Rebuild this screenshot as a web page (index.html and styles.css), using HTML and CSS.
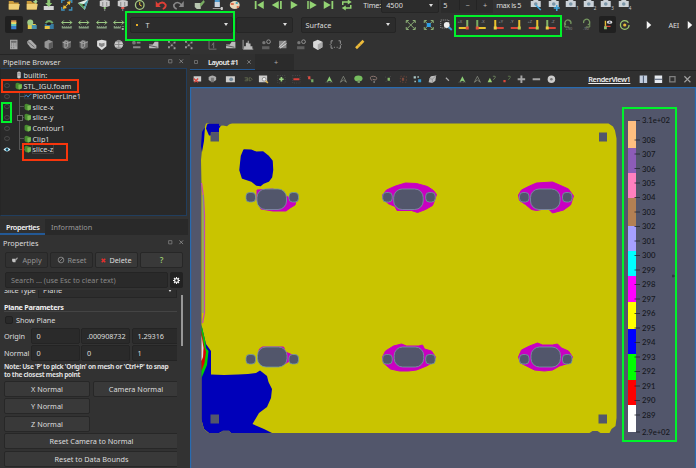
FILE: index.html
```
<!DOCTYPE html>
<html lang="en">
<head>
<meta charset="utf-8">
<title>ParaView</title>
<link rel="stylesheet" href="styles.css">
</head>
<body>
<svg class="defs" aria-hidden="true">
<symbol id="folder" viewBox="0 0 14 14"><path d="M2 3h4.500l1 1.500H12v7H2z" fill="#c99b3c"/><path d="M2 6h11l-1 5.500H2z" fill="#efcf76"/></symbol>
<symbol id="folder2" viewBox="0 0 14 14"><path d="M2 3h4.500l1 1.500H12v7H2z" fill="#c99b3c"/><path d="M2 6h11l-1 5.500H2z" fill="#efcf76"/><path d="M8 3h2V1h2v2h1l-2 3z" fill="#a5d18d"/></symbol>
<symbol id="save" viewBox="0 0 14 14"><path d="M2 8h10v4H2z" fill="#d5d5d5"/><path d="M5.500 1h3v4h2L7 9 3.500 5h2z" fill="#8fc975"/></symbol>
<symbol id="extract" viewBox="0 0 14 14"><path d="M2 5V2h3M9 2h3v3M2 9v3h3M9 12h3V9" fill="none" stroke="#3f92bf" stroke-width="1.300"/><path d="M3 11 4 7l1.300 1.200L8 5.500 7 4l4-1-1 4-1.300-1L6 8.700 7.200 10z" fill="#f3bf35"/></symbol>
<symbol id="catalyst" viewBox="0 0 14 14"><path d="m1 5 11-4-4 11z" fill="#e4eee7"/><path d="m1 5 6 1 1 6z" fill="#5c9d61"/><path d="m7 6 5-5-4 11z" fill="#4c9fb0"/><path d="M6 6h2v2H6z" fill="#332"/></symbol>
<symbol id="server" viewBox="0 0 14 14"><path d="M2 3q5-2 10 0v5q-5 2-10 0z" fill="#ccc"/><path d="M5 4v4M9 4v4M7 9v4" stroke="#8a8a8a"/><path d="M6 9h2v2H6z" fill="#8cc276"/></symbol>
<symbol id="serverx" viewBox="0 0 14 14"><path d="M2 3q5-2 10 0v5q-5 2-10 0z" fill="#ccc"/><path d="M5 4v4M9 4v4M7 9v4" stroke="#8a8a8a"/><path d="M5.500 9h3v2h-3z" fill="#df5b54"/></symbol>
<symbol id="timer" viewBox="0 0 14 14"><circle cx="7" cy="7" r="4.300" fill="#2c2c2c" stroke="#a5c982" stroke-width="1.300"/><path d="M7 4v3l2 1" fill="none" stroke="#e8c33b"/></symbol>
<symbol id="undo" viewBox="0 0 14 14"><path d="M4 7q5-5 8 0 0 3-3 4" fill="none" stroke="#df3f36" stroke-width="1.800"/><path d="M2 3v6h5z" fill="#df3f36"/></symbol>
<symbol id="redo" viewBox="0 0 14 14"><path d="M10 7Q5 2 2 7q0 3 3 4" fill="none" stroke="#888" stroke-width="1.600"/><path d="M12 3v6H7z" fill="#888"/></symbol>
<symbol id="apply" viewBox="0 0 14 14"><path d="M2 5h6v6H4L2 9z" fill="#b8c7b0"/><path d="m7 6 4-4 1 2-4 5z" fill="#78ad60"/></symbol>
<symbol id="legend" viewBox="0 0 14 14"><path d="M4 0h5v9H4z" fill="#4e9bd0"/><path d="M4 4h5v5H4z" fill="#cdd5dc"/><path d="M2 10h10v1H2z" fill="#999"/><path d="M10 9h2v3h-2z" fill="#ccc"/></symbol>
<symbol id="palette" viewBox="0 0 14 14"><ellipse cx="7" cy="7" rx="5" ry="4" fill="#e6d8b9"/><path d="M3 5h3v2H3zM9 8h2v2H9z" fill="#df704d"/><path d="M8 4h2v2H8z" fill="#4aa8ba"/></symbol>
<symbol id="first" viewBox="0 0 14 14"><path d="M3 3h1.800v8H3zM12 3v8L5.500 7z" fill="#93d373"/></symbol>
<symbol id="prev" viewBox="0 0 14 14"><path d="M9 3v8L2 7zM10.300 3H12v8h-1.700z" fill="#93d373"/></symbol>
<symbol id="play" viewBox="0 0 14 14"><path d="m4 3 7 4-7 4z" fill="#93d373"/></symbol>
<symbol id="next" viewBox="0 0 14 14"><path d="m5 3 7 4-7 4zM2.500 3H4v8H2.500z" fill="#93d373"/></symbol>
<symbol id="last" viewBox="0 0 14 14"><path d="M9.700 3h1.800v8H9.700zM2 3v8l7-4z" fill="#93d373"/></symbol>
<symbol id="loop" viewBox="0 0 14 14"><path d="M3 7V4h6M11 7v3H5" fill="none" stroke="#93d373" stroke-width="1.500"/><path d="m8 1.500 4 2.500-4 2.500zM6 7.500 2 10l4 2.500z" fill="#93d373"/></symbol>
<symbol id="cam" viewBox="0 0 14 14"><path d="M2 3h2l1-1h4l1 1h2v6H2z" fill="#cbd2d8"/><circle cx="7" cy="6" r="1.800" fill="#7a96a8"/></symbol>
<symbol id="camlink" viewBox="0 0 14 14"><use href="#cam"/><path d="m7 7 5 5" stroke="#41a8df" stroke-width="1.600"/></symbol>
<symbol id="camadd" viewBox="0 0 14 14"><use href="#cam"/><path d="M10 7v6M7 10h6" stroke="#41a8df" stroke-width="1.600"/></symbol>
<symbol id="cbar" viewBox="0 0 14 14"><path d="M4.200 2.500h5.600v3H4.200z" fill="#d99655"/><path d="M4.200 4.500h5.600v2H4.200z" fill="#e5de68"/><path d="M4.200 6.500h5.600v2H4.200z" fill="#62c5b7"/><path d="M4.200 8.500h5.600v3.500H4.200z" fill="#397dcc"/></symbol>
<symbol id="editmap" viewBox="0 0 14 14"><path d="M3 6h8v5H3z" fill="#e6cf4d"/><path d="M7 7h5v4H7z" fill="#4a92ad"/><circle cx="5.500" cy="4.500" r="3" fill="#9fcc88"/></symbol>
<symbol id="sepmap" viewBox="0 0 14 14"><path d="M3 6h9v5H3z" fill="#377aa1"/><path d="M3 8h5v3H3z" fill="#ebc643"/><path d="M4 5q3-4 7 0" fill="none" stroke="#72a966" stroke-width="2"/><path d="M5 5h4v2H5z" fill="#222"/></symbol>
<symbol id="rescale" viewBox="0 0 14 14"><path d="M2 4.500h10M4 2.500l-2 2 2 2M10 2.500l2 2-2 2" fill="none" stroke="#9ccb83"/><path d="M2 8h10v2.500H2z" fill="#829a7c"/><path d="M4 8v1M6 8v1M8 8v1M10 8v1" stroke="#2c2c2c"/></symbol>
<symbol id="rescalet" viewBox="0 0 14 14"><use href="#rescale"/><path d="M9 9h4v3H9z" fill="#303030"/><path d="M10 10h2v2h-2z" fill="#aaa"/></symbol>
<symbol id="reset" viewBox="0 0 14 14"><path d="m3 3 8 8M11 3l-8 8" stroke="#8caf76"/><path d="M2.500 5V2.500H5M9 2.500h2.500V5M2.500 9v2.500H5M9 11.500h2.500V9" fill="none" stroke="#8caf76"/></symbol>
<symbol id="resetd" viewBox="0 0 14 14"><use href="#reset"/><path d="M5 5h4v4H5z" fill="#2e9fe5"/></symbol>
<symbol id="zoombox" viewBox="0 0 14 14"><path d="M2 2h8v8H2z" fill="none" stroke="#999" stroke-dasharray="1"/><circle cx="8" cy="7" r="2.900" fill="#eee"/><path d="m10 9 3 3" stroke="#409bd1" stroke-width="1.800"/></symbol>
<symbol id="axr" viewBox="0 0 14 14"><path d="M3.500 2v8" fill="none" stroke="#79ad60" stroke-width="2"/><path d="M4 10h8" stroke="#e9c32d" stroke-width="2"/><path d="M2 8.500h3v3H2z" fill="#e4523d"/></symbol>
<symbol id="axy" viewBox="0 0 14 14"><path d="M3.500 2v8" stroke="#e9c32d" stroke-width="2"/><path d="M4 10h8" stroke="#db4637" stroke-width="2"/><path d="M2 8.500h3v3H2z" fill="#ead246"/></symbol>
<symbol id="axz" viewBox="0 0 14 14"><path d="M3.500 2v8" stroke="#84b569" stroke-width="2"/><path d="M4 10h8" stroke="#db4637" stroke-width="2"/><path d="M2 8.500h3v3H2z" fill="#ead246"/></symbol>
<symbol id="axl" viewBox="0 0 14 14"><path d="M10.500 2v8" stroke="#84b569" stroke-width="2"/><path d="M2 10h8" stroke="#e9c32d" stroke-width="2"/><path d="M9 8.500h3v3H9z" fill="#e4523d"/></symbol>
<symbol id="axly" viewBox="0 0 14 14"><path d="M10.500 2v8" stroke="#e9c32d" stroke-width="2"/><path d="M2 10h8" stroke="#db4637" stroke-width="2"/><path d="M9 8.500h3v3H9z" fill="#bccf4d"/></symbol>
<symbol id="rotr" viewBox="0 0 14 14"><path d="M9 6a3 3 0 1 0-5 1" fill="none" stroke="#76975f" stroke-width="1.300"/><path d="M3 5v4h4" fill="none" stroke="#76975f"/></symbol>
<symbol id="rotl" viewBox="0 0 14 14"><path d="M5 5a3 3 0 1 1 4 2" fill="none" stroke="#76975f" stroke-width="1.300"/><path d="M11 5v4H7" fill="none" stroke="#76975f"/></symbol>
<symbol id="orient" viewBox="0 0 14 14"><path d="M4.500 3v7" stroke="#e8bd32" stroke-width="1.500"/><path d="M4 9h6" stroke="#db4637" stroke-width="1.500"/><path d="M3 9h3v3H3z" fill="#91be70"/><ellipse cx="9" cy="4.500" rx="3" ry="1.800" fill="#ddd"/><circle cx="9" cy="4.500" r="1" fill="#557"/></symbol>
<symbol id="center" viewBox="0 0 14 14"><circle cx="7" cy="7" r="4.300" fill="none" stroke="#9bc96f" stroke-width="1.300" stroke-dasharray="24 3"/><circle cx="7" cy="7" r="1.600" fill="#e7bc37"/></symbol>
<symbol id="arrow" viewBox="0 0 14 14"><path d="m5 3 4.500 4L5 11z" fill="#f4f4f4"/></symbol>
<symbol id="calc" viewBox="0 0 14 14"><path d="M3 2h8v10H3z" fill="#aaa"/><path d="M4 3h6v2H4zM4 6h1v1H4zM6.500 6h1v1h-1zM9 6h1v1H9zM4 8h1v1H4zM6.500 8h1v1h-1zM9 8h1v1H9zM4 10h1v1H4zM6.500 10h1v1h-1z" fill="#686868"/></symbol>
<symbol id="contour" viewBox="0 0 14 14"><path d="M2 4q3-4 6 0l4 4v3q-5 2-8-3Q2 7 2 4z" fill="#aaa"/><path d="m3 4 7 6" stroke="#666"/></symbol>
<symbol id="cube" viewBox="0 0 14 14"><path d="m2.500 4 4.500-2 4.500 2v6L7 12.500 2.500 10z" fill="#969696"/><path d="m7 6 4.500-2v6L7 12.500z" fill="#5b5b5b"/></symbol>
<symbol id="cube2" viewBox="0 0 14 14"><path d="m2.500 4 4.500-2 4.500 2v6L7 12.500 2.500 10z" fill="#666"/><path d="M5 3v8l3-2V4zM2.500 4.500 7 6l4.500-2" fill="none" stroke="#aaa"/></symbol>
<symbol id="shield" viewBox="0 0 14 14"><path d="m2 3 5-1 5 1v6l-5 4-5-4z" fill="#ddd"/><path d="m4 5 3 1 3-1v3l-3 2-3-2z" fill="#888"/></symbol>
<symbol id="globe" viewBox="0 0 14 14"><circle cx="7" cy="7" r="4.700" fill="#ccc"/><path d="M2 7h10M7 2v10M4 4h6M4 10h6" stroke="#888"/></symbol>
<symbol id="glyphs" viewBox="0 0 14 14"><circle cx="4" cy="5" r="2" fill="#777"/><path d="M7 4h4v2H7zM3 9h8v2H3z" fill="#888"/></symbol>
<symbol id="stream" viewBox="0 0 14 14"><path d="M2 7h4l2-3h4v7H2z" fill="#bbb"/><path d="m2 8 9 2" stroke="#555"/></symbol>
<symbol id="dots" viewBox="0 0 14 14"><path d="m4 4 3 3 4-3M7 7l4 4M7 7l-3 4" stroke="#555" fill="none"/><path d="M3 3h2v2H3zM9 4h2v2H9zM6 7h2v2H6zM9 10h2v2H9zM3 9h2v2H3z" fill="#999"/></symbol>
<symbol id="plotl" viewBox="0 0 14 14"><path d="M3 2v10h8" fill="none" stroke="#777"/><path d="M6 8l2-3v6" fill="none" stroke="#777"/></symbol>
<symbol id="hist" viewBox="0 0 14 14"><path d="M2 2v10h11" fill="none" stroke="#aaa"/><path d="M3 12V9h2V5h2V3h1v3h2v3h2v3z" fill="#bbb"/></symbol>
<symbol id="pick" viewBox="0 0 14 14"><circle cx="5" cy="5" r="1.800" fill="#777"/><circle cx="10" cy="4" r="2" fill="none" stroke="#999"/><path d="M3 9h8v3H3z" fill="#606060"/></symbol>
<symbol id="ramp" viewBox="0 0 14 14"><path d="M3 3h8v8H3z" fill="#888"/><path d="m3 10 7-7M4 11l7-5" stroke="#ddd"/></symbol>
<symbol id="poly" viewBox="0 0 14 14"><path d="m2 4 5-2 5 2v6l-5 3-5-3z" fill="#d8d8d8"/><path d="m7 7 5-3v6l-5 3z" fill="#aaa"/></symbol>
<symbol id="braces" viewBox="0 0 14 14"><path d="M4 3H2v3L1 7l1 1v3h2M10 3h2v3l1 1-1 1v3h-2" fill="none" stroke="#999"/><path d="M5 10h1M8 10h1" stroke="#aaa"/></symbol>
<symbol id="ruler" viewBox="0 0 14 14"><path d="m2 10 8-8 2 2-8 8z" fill="#efbd3b"/><path d="m5 8 1 1M7 6l1 1" stroke="#a5792c"/></symbol>
<symbol id="camred" viewBox="0 0 14 14"><path d="M2 3h10v7H2z" fill="#ccc"/><path d="m3 11 5-5M2 6l6 5" stroke="#dc4940" stroke-width="1.800"/></symbol>
<symbol id="camgray" viewBox="0 0 14 14"><path d="M2 4q5-4 10 0v4q-5 4-10 0z" fill="#aaa"/><path d="M5 5h4v6H5z" fill="#787878"/></symbol>
<symbol id="shot" viewBox="0 0 14 14"><path d="M1 3h12v8H1z" fill="#ccc"/><circle cx="8" cy="7" r="2.500" fill="#708798"/></symbol>
<symbol id="three" viewBox="0 0 14 14"><path d="M2 5h4v4H2M3 7h3M8 5h2q4 2 0 4H8z" fill="none" stroke="#687052"/></symbol>
<symbol id="zoomv" viewBox="0 0 14 14"><path d="M1 2h11v9H1z" fill="#ccc"/><circle cx="8" cy="7" r="2.500" fill="#eee" stroke="#777"/><path d="m10 9 3 3" stroke="#ddb14a" stroke-width="2"/></symbol>
<symbol id="plusg" viewBox="0 0 14 14"><path d="M2 2h10v10H2z" fill="none" stroke="#555" stroke-dasharray="1 2"/><path d="M7 4v6M4 7h6" stroke="#9bd47d" stroke-width="2.200"/></symbol>
<symbol id="minusr" viewBox="0 0 14 14"><path d="M2 2h10v10H2z" fill="none" stroke="#555" stroke-dasharray="1 2"/><path d="M3 7h8" stroke="#dc4039" stroke-width="2.400"/></symbol>
<symbol id="selr" viewBox="0 0 14 14"><path d="m3 3 8 8" stroke="#777" stroke-dasharray="1"/><path d="M4 3h3v4H4z" fill="#df4e43"/><path d="M8 7h3v4H8z" fill="#76ad64"/></symbol>
<symbol id="tri" viewBox="0 0 14 14"><path d="m7 3 4 8-4-2-4 2z" fill="#8aca75"/><path d="M2 11h10" stroke="#777" stroke-dasharray="1"/></symbol>
<symbol id="trio" viewBox="0 0 14 14"><path d="m7 3 4 8-4-3-4 3z" fill="none" stroke="#898f82"/></symbol>
<symbol id="blob" viewBox="0 0 14 14"><ellipse cx="7" cy="6" rx="5.500" ry="4" fill="#76bd5f"/><path d="M6 8h3v4H6z" fill="#769366"/></symbol>
<symbol id="lasso" viewBox="0 0 14 14"><path d="M5 9Q0 3 7 3q7 1 3 5L6 7" fill="none" stroke="#8e7771" stroke-width="1.300"/><path d="M7 9h2v3H7z" fill="#777"/></symbol>
<symbol id="dotg" viewBox="0 0 14 14"><path d="m3 4 8 7M10 3l-7 8" stroke="#666" stroke-dasharray="1 2"/><path d="M6 5h3v4H6z" fill="#86ba68"/></symbol>
<symbol id="dotr" viewBox="0 0 14 14"><path d="M3 3h8v8H3z" fill="none" stroke="#5d4038" stroke-width="1.500" stroke-dasharray="2 2"/><path d="M5 5h3v4H5z" fill="#7c4a3c"/></symbol>
<symbol id="selb" viewBox="0 0 14 14"><path d="M2 3h3v3H2zM7 3h2v2H7zM3 9h2v2H3z" fill="#acc8c8"/><path d="M8 7h4v4H8z" fill="#3399cd"/></symbol>
<symbol id="poly2" viewBox="0 0 14 14"><path d="m5 3 7-1-1 7-4 3-5-1 1-5z" fill="#bbb"/><path d="m3 6 4 1 5-5M7 7v5" fill="none" stroke="#888"/></symbol>
<symbol id="smalldot" viewBox="0 0 14 14"><path d="m5 5 4 4" stroke="#aaa" stroke-width="1.500"/></symbol>
<symbol id="triq" viewBox="0 0 14 14"><path d="m5 5 3 6H2z" fill="#99cd72"/><path d="M9 3h3v2l-2 2v1" fill="none" stroke="#789166"/></symbol>
<symbol id="dotq" viewBox="0 0 14 14"><path d="M3 8h3v3H3z" fill="#df4739"/><path d="M9 3h3v2l-2 2v1" fill="none" stroke="#658453"/></symbol>
<symbol id="plusw" viewBox="0 0 14 14"><path d="M7 2v10M2 7h10" stroke="#a4a4a4" stroke-width="2.600"/></symbol>
<symbol id="minusw" viewBox="0 0 14 14"><path d="M2 7h10" stroke="#a4a4a4" stroke-width="2.400"/></symbol>
<symbol id="disc" viewBox="0 0 14 14"><circle cx="7" cy="7" r="5" fill="#ccc"/><circle cx="7" cy="7" r="1.700" fill="#777"/></symbol>
<symbol id="splith" viewBox="0 0 14 14"><path d="M2 2h10v10H2z" fill="#c2cdde"/><path d="M7 2v10" stroke="#46536c" stroke-width="1.300"/></symbol>
<symbol id="splitv" viewBox="0 0 14 14"><path d="M2 2h10v10H2z" fill="#e6eaf0"/><path d="M2 7h10" stroke="#46536c" stroke-width="1.300"/></symbol>
<symbol id="max" viewBox="0 0 14 14"><path d="M3.500 3.500h7v7h-7z" fill="none" stroke="#808080" stroke-width="1.700"/></symbol>
<symbol id="close" viewBox="0 0 14 14"><path d="m3 3 8 8M11 3l-8 8" stroke="#a0a0a0" stroke-width="1.500"/></symbol>
<symbol id="green" viewBox="0 0 14 14"><path d="M1 3q3-3 6-1l5 2v7l-4 2q-5 1-7-3z" fill="#488d2f"/><path d="m6 5 6-1v7l-4 2-2-1z" fill="#7cba55"/></symbol>
<symbol id="line" viewBox="0 0 14 14"><path d="M1 3v9h12" fill="none" stroke="#424b56"/><path d="m1 9 3-4 3 4 4-5h2" fill="none" stroke="#4087c7" stroke-width="1.700"/></symbol>
<symbol id="eye" viewBox="0 0 14 14"><path d="M0 7q7-8 14 0-7 8-14 0z" fill="#ecf7fb"/><circle cx="7" cy="7" r="3.500" fill="#49a9cb"/><circle cx="7" cy="7" r="2" fill="#162b35"/></symbol>
<symbol id="eyeoff" viewBox="0 0 14 14"><path d="M2 7q0-4 5-4t5 4-5 4-5-4z" fill="none" stroke="#535353" stroke-width="1.500"/></symbol>
<symbol id="db" viewBox="0 0 14 14"><path d="M4 2q3-2 6 0v10q-3 2-6 0z" fill="#ccc"/><path d="M5 4h4M5 7h4" stroke="#666"/></symbol>
<symbol id="gear" viewBox="0 0 14 14"><circle cx="7" cy="7" r="3.800" fill="none" stroke="#f2f2f2" stroke-width="2.400"/><path d="M7 0v3M7 11v3M0 7h3M11 7h3M2 2l2 2M10 10l2 2M12 2l-2 2M4 10l-2 2" stroke="#f2f2f2" stroke-width="2.200"/></symbol>
<symbol id="ban" viewBox="0 0 14 14"><circle cx="7" cy="7" r="5" fill="none" stroke="#858585" stroke-width="1.600"/><path d="m3.500 10.500 7-7" stroke="#858585" stroke-width="1.500"/></symbol>
<symbol id="delx" viewBox="0 0 14 14"><path d="m2 2 10 10M12 2 2 12" stroke="#e1302e" stroke-width="4.500"/></symbol>
</svg>

<div class="app">
<header class="toolbars">
<div class="bar bar1">
<svg><use href="#folder"/></svg><svg><use href="#folder2"/></svg><svg><use href="#save"/></svg><svg><use href="#extract"/></svg><svg><use href="#catalyst"/></svg>
<svg class="gap"><use href="#server"/></svg><svg><use href="#serverx"/></svg><svg><use href="#timer"/></svg>
<svg class="gap"><use href="#undo"/></svg><svg><use href="#redo"/></svg>
<svg class="gap"><use href="#apply"/></svg><svg><use href="#legend"/></svg><svg><use href="#palette"/></svg>
<svg class="gap2"><use href="#first"/></svg><svg><use href="#prev"/></svg><svg><use href="#play"/></svg><svg><use href="#next"/></svg><svg><use href="#last"/></svg><svg><use href="#loop"/></svg>
<span class="time">Time:</span><div class="combo timebox">4500<i class="caret"></i></div><div class="spin"><span>5</span><b>−</b><b>+</b></div><span class="maxis">max is 5</span>
<svg><use href="#camlink"/></svg><svg><use href="#camadd"/></svg><span class="cam"><svg><use href="#cam"/></svg><small>1</small></span><span class="cam"><svg><use href="#cam"/></svg><small>2</small></span><span class="cam"><svg><use href="#cam"/></svg><small>3</small></span><span class="cam"><svg><use href="#cam"/></svg><small>4</small></span>
</div>
<div class="bar bar2">
<svg class="on"><use href="#cbar"/></svg><svg><use href="#editmap"/></svg><svg><use href="#sepmap"/></svg><svg><use href="#rescale"/></svg><svg><use href="#rescale"/></svg><svg><use href="#rescale"/></svg><svg><use href="#rescalet"/></svg>
<div class="combo array"><i class="point"></i>T<i class="caret"></i></div><div class="combo component"><i class="caret"></i></div><div class="combo repr">Surface<i class="caret"></i></div>
<svg><use href="#reset"/></svg><svg><use href="#resetd"/></svg><svg><use href="#zoombox"/></svg>
<span class="cam ax l"><svg><use href="#axl"/></svg><small>+X</small></span><span class="cam ax"><svg><use href="#axr"/></svg><small>-X</small></span><span class="cam ax"><svg><use href="#axy"/></svg><small>+Y</small></span><span class="cam ax l"><svg><use href="#axly"/></svg><small>-Y</small></span><span class="cam ax l"><svg><use href="#axly"/></svg><small>+Z</small></span><span class="cam ax"><svg><use href="#axz"/></svg><small>-Z</small></span>
<span class="cam rot"><svg><use href="#rotr"/></svg><small>+90</small></span><span class="cam rot"><svg><use href="#rotl"/></svg><small>-90</small></span>
<svg class="on orient"><use href="#orient"/></svg><svg><use href="#center"/></svg><svg class="gap2"><use href="#arrow"/></svg><span class="aei">AEI</span><svg><use href="#arrow"/></svg>
</div>
<div class="bar bar3">
<svg><use href="#calc"/></svg><svg><use href="#contour"/></svg><svg><use href="#cube"/></svg><svg><use href="#cube2"/></svg><svg><use href="#cube2"/></svg><svg><use href="#shield"/></svg><svg><use href="#globe"/></svg><svg><use href="#glyphs"/></svg><svg><use href="#stream"/></svg><svg><use href="#dots"/></svg><svg><use href="#dots"/></svg>
<svg class="gap2"><use href="#plotl"/></svg><svg><use href="#stream"/></svg><svg><use href="#hist"/></svg><svg><use href="#pick"/></svg><svg><use href="#ramp"/></svg><svg><use href="#pick"/></svg><svg><use href="#poly"/></svg><svg><use href="#braces"/></svg><svg class="gap2"><use href="#ruler"/></svg>
</div>
</header>

<main class="work">
<aside class="side">
<div class="title">Pipeline Browser<span class="btns"><svg><use href="#max"/></svg><svg><use href="#close"/></svg></span></div>
<div class="tree">
<div class="node root"><svg class="vis"></svg><svg class="type"><use href="#db"/></svg>builtin:</div>
<div class="node foam"><svg class="vis"><use href="#eyeoff"/></svg><svg class="type"><use href="#green"/></svg>STL_IGU.foam</div>
<div class="node"><svg class="vis"><use href="#eyeoff"/></svg><i class="twig"></i><svg class="type"><use href="#line"/></svg>PlotOverLine1</div>
<div class="node"><svg class="vis"><use href="#eyeoff"/></svg><i class="twig"></i><svg class="type"><use href="#green"/></svg>slice-x</div>
<div class="node"><svg class="vis"><use href="#eyeoff"/></svg><i class="twig box"></i><svg class="type"><use href="#green"/></svg>slice-y</div>
<div class="node"><svg class="vis"><use href="#eyeoff"/></svg><i class="twig none"></i><svg class="type"><use href="#green"/></svg>Contour1</div>
<div class="node"><svg class="vis"><use href="#eyeoff"/></svg><i class="twig"></i><svg class="type"><use href="#green"/></svg>Clip1</div>
<div class="node"><svg class="vis"><use href="#eye"/></svg><i class="twig end"></i><svg class="type"><use href="#green"/></svg><span class="current">slice-z</span></div>
</div>
<nav class="tabs"><span class="active">Properties</span><span>Information</span></nav>
<div class="title prop">Properties<span class="btns"><svg><use href="#max"/></svg><svg><use href="#close"/></svg></span></div>
<div class="actions"><button class="off"><svg><use href="#apply"/></svg>Apply</button><button class="off"><svg><use href="#ban"/></svg>Reset</button><button><svg class="x"><use href="#delx"/></svg>Delete</button><button class="help">?</button></div>
<div class="search"><div class="field">Search ... (use Esc to clear text)</div><span class="cog"><svg><use href="#gear"/></svg></span></div>
<div class="scroller">
<div class="form">
<div class="cut"><div class="cutrow"><span>Slice Type</span><div class="plane">Plane<i class="caret"></i></div></div></div>
<h2>Plane Parameters</h2>
<label class="check"><i></i>Show Plane</label>
<div class="vec"><span>Origin</span><div class="field">0</div><div class="field">.000908732</div><div class="field">1.29316</div></div>
<div class="vec"><span>Normal</span><div class="field">0</div><div class="field">0</div><div class="field">1</div></div>
<p class="note">Note: Use 'P' to pick 'Origin' on mesh or 'Ctrl+P' to snap<br>to the closest mesh point</p>
<div class="normals"><button>X Normal</button><button>Camera Normal</button><button>Y Normal</button><i></i><button>Z Normal</button><i></i><button class="wide">Reset Camera to Normal</button><button class="wide">Reset to Data Bounds</button></div>
</div>
<div class="thumb"></div>
</div>
</aside>

<section class="view">
<div class="layouts"><div class="layout"><svg><use href="#max"/></svg><b>Layout #1</b><svg><use href="#close"/></svg></div><span class="add">+</span></div>
<div class="vbar">
<svg><use href="#camred"/></svg><svg><use href="#camgray"/></svg><svg class="g"><use href="#shot"/></svg><svg class="g"><use href="#three"/></svg><svg><use href="#zoomv"/></svg><svg class="g"><use href="#plusg"/></svg><svg><use href="#minusr"/></svg><svg><use href="#selr"/></svg><svg class="g"><use href="#tri"/></svg><svg><use href="#trio"/></svg><svg><use href="#blob"/></svg><svg><use href="#lasso"/></svg><svg><use href="#dotg"/></svg><svg><use href="#dotr"/></svg><svg><use href="#selb"/></svg><svg><use href="#poly2"/></svg><svg><use href="#smalldot"/></svg><svg><use href="#tri"/></svg><svg><use href="#trio"/></svg><svg><use href="#triq"/></svg><svg><use href="#dotq"/></svg><svg><use href="#plusw"/></svg><svg><use href="#minusw"/></svg><svg><use href="#disc"/></svg>
<span class="vname">RenderView1</span><svg><use href="#splith"/></svg><svg><use href="#splitv"/></svg><svg><use href="#max"/></svg><svg><use href="#close"/></svg>
</div>
<svg class="render" viewBox="190 87 506 381">
<path fill="#c9c400" d="M206 123.500h402.500l4.500 3 2 4 1.500 8V418l-1 8-4 3-2 4h-9l-3-2h-5l-3 2H204l-2.500-10V185l-.5-25 3-30z"/>
<path fill="#0000ba" d="M207 124.500l2-1h11l1 2-2 3v4h-8v3h-2l-3-7zM205 127l-1 14-2 11-1-6 1-14z"/>
<path fill="#0000ba" stroke="#0000ba" stroke-width="1.500" stroke-linejoin="round" d="M244 150l7 .2 5 2 7-.2 5 4 4 5 .5 9-1 7-3 4-5 2-3 2.500-4-.5-5-4-9-3-2.500-8 1.500-14z"/>
<path d="M219 123h13l-3 1.500-2 1.800-4-.8-4 .5z" fill="#52566b"/>
<path fill="#0000ba" d="M201.500 325L206 344L211 351V374.500L224 375L238 374.500L248 374L256 373L260 370.500L262 372L267 376L268.500 382L272 389L271 398L267 407L259 413L252.500 424L264 429L272 433H231L229 431H223L219 433H209L204 429L201.500 420z"/>
<path fill="#52566b" d="M201 418l3 11 5 4.500h-8zM219 433.500l4-3h6l2 3z"/>
<path fill="#00d000" d="M201.500 325L205 340L206 348L208.500 351L207 365L201.500 378z"/><path fill="#e00000" d="M201.500 330L204 346L206 352L204.500 363L201.500 371z"/><path fill="#ddd" d="M201.500 335L203.500 348L203 357L201.500 361z"/>
<path d="M201.500 183l2 14 1 18V313l-2 10" fill="none" stroke="#c64bae" stroke-width="1.300"/><path d="M203 195v118" stroke="#6194a3" stroke-width="1"/>
<g fill="#c900c1" stroke="#c900c1" stroke-linejoin="round">
<path d="M257 190v10l4 9 12 2h13l4-3 5-3 1-4-8-4-15-8z"/>
<path d="M382.500 195l4-5 9-4 10-3 11 .5 11 3 6 4 3 4-2 6-2 5-7 4-8 3-6-2H397l-2-4-7-3-5-5z"/>
<path d="M518.500 195l3-5 8-4 7-3 16-1 7 3 9 4 5 7-3 9-7 5-11 3-4-4-7 .500-5 1-5-1-6-5-6-4z"/>
<path d="M258.500 353l1-4 3-2h21l2 5 7 3-3 6-5 3-23 1z"/>
<path d="M382.500 357l3-6 8-5 8-2 5 2h12l4-1 2 4 7 2 4 6-2 5-7 4-10 4-8 1h-9l-9-2-7-6z"/>
<path d="M518.500 357l3-7 8-4 8-3 5 2h10l5-1 4 4 7 3 4 6-3 6-10 3-7 4-8 1-10-1-8-4-6-3z"/>
</g>
<g fill="#52566b" stroke="#7599a5" stroke-width=".8"><g id="fit"><rect x="257" y="189" width="29.500" height="20.500" rx="8.500"/><rect x="246" y="192.500" width="9.500" height="9.500" rx="3.500"/><rect x="289" y="192.500" width="9.500" height="9.500" rx="3.500"/></g><use href="#fit" x="136.700"/><use href="#fit" x="273.500"/>
<g id="fit2"><rect x="257.500" y="347" width="29.500" height="20" rx="8.500"/><rect x="246" y="354.500" width="9.500" height="9.500" rx="3.500"/><rect x="289" y="354.500" width="9.500" height="9.500" rx="3.500"/></g><use href="#fit2" x="136.700"/><use href="#fit2" x="273.500"/></g>
<path fill="#52566b" d="M210.500 132.500h8.500v9h-8.500zM599 132.500h8v9h-8zM210.500 414.500h8.500v9h-8.500zM598.500 414.500h8.500v9h-8.500z"/>
<g shape-rendering="crispEdges"><path fill="#ffbf80" d="M628 120.500h8v27h-8z"/><path fill="#8c5cb7" d="M628 147.500h8v25.500h-8z"/><path fill="#ff80bf" d="M628 173h8v25h-8z"/><path fill="#b38053" d="M628 198h8v27.500h-8z"/><path fill="#a6a0ff" d="M628 225.500h8v25h-8z"/><path fill="#00ffff" d="M628 250.500h8v25h-8z"/><path fill="#ff00ff" d="M628 275.500h8V302h-8z"/><path fill="#ffff00" d="M628 302h8v27h-8z"/><path fill="#0000ff" d="M628 329h8v24.500h-8z"/><path fill="#00ff00" d="M628 353.500h8v26.500h-8z"/><path fill="#ff0000" d="M628 380h8v25h-8z"/><path fill="#fff" d="M628 405h8v27h-8z"/></g>
<path stroke="#24262f" stroke-width=".8" d="M636 120.500h4M634.500 140h5.500M634.500 154h5.500M634.500 168.500h5.500M634.500 183h5.500M634.500 197.500h5.500M634.500 212h5.500M634.500 226.500h5.500M634.500 241h5.500M634.500 255.500h5.500M634.500 270h5.500M634.500 284.500h5.500M634.500 299h5.500M634.500 313.500h5.500M634.500 328h5.500M634.500 342.500h5.500M634.500 357h5.500M634.500 371.500h5.500M634.500 386h5.500M634.500 400.500h5.500M634.500 415h5.500M636 432h4M672 276h5M673 274.500v3"/>
<g class="ticks"><text x="642" y="123" textLength="28">3.1e+02</text><text x="642" y="142.500">308</text><text x="642" y="157">307</text><text x="642" y="171.500">306</text><text x="642" y="186">305</text><text x="642" y="200">304</text><text x="642" y="215">303</text><text x="642" y="229">302</text><text x="642" y="243.500">301</text><text x="642" y="258">300</text><text x="642" y="272.500">299</text><text x="642" y="287">298</text><text x="642" y="301.500">297</text><text x="642" y="316">296</text><text x="642" y="330.500">295</text><text x="642" y="345">294</text><text x="642" y="359.500">293</text><text x="642" y="374">292</text><text x="642" y="388.500">291</text><text x="642" y="403">290</text><text x="642" y="417.500">289</text><text x="642" y="434.500" textLength="28">2.9e+02</text></g>
<path d="M190.500 468V87.500h505V468" fill="none" stroke="#286bb0" stroke-width="1.400"/>
</svg>
</section>
</main>
<div class="mark green m1"></div><div class="mark green m2"></div><div class="mark green m3"></div><div class="mark green m4"></div><div class="mark red m5"></div><div class="mark red m6"></div>
</div>
</body>
</html>
```
FILE: styles.css
```
* { box-sizing: border-box; }
body { margin: 0; background: #323232; color: #dedede; font: 7.3px/10px "Noto Sans", sans-serif; overflow: hidden; }
.defs { position: absolute; width: 0; height: 0; }
svg { flex: none; }
.app { position: relative; width: 696px; height: 468px; overflow: hidden; display: flex; flex-direction: column; }
.toolbars { height: 54px; flex: none; overflow: hidden; }
.bar { display: flex; align-items: center; padding-left: 5px; white-space: nowrap; }
.bar > * { flex: none; }
.bar svg { width: 17.500px; height: 14px; }
.bar1 { height: 18px; margin-top: -4px; }
.bar2 { height: 21px; }
.bar3 { height: 18px; }
.bar3 svg { height: 13px; }
.bar .gap { margin-left: 3.700px; }
.bar .gap2 { margin-left: 6.600px; }
.bar svg.on { height: 17px; padding: 2px 0; background: #202020; border-radius: 2px; }
.combo { display: flex; align-items: center; height: 16px; padding: 0 5px; background: #2c2c2c; border: 1px solid #252525; border-radius: 2px; }
.caret { margin-left: auto; border: 2.500px solid transparent; border-top: 3px solid #ddd; border-bottom: 0; }
.time { width: 18px; margin-left: 8px; letter-spacing: -.2px; }
.timebox { width: 58px; padding-left: 4px; }
.spin { display: flex; align-items: center; width: 52px; height: 16px; margin-left: 2px; padding-left: 2px; background: #2c2c2c; }
.spin span { width: 16px; }
.spin b { width: 18px; text-align: center; font-weight: 400; color: #bbb; border-left: 1px solid #242424; }
.maxis { margin-left: 3px; width: 31px; letter-spacing: -.4px; }
.cam { position: relative; display: flex; width: 17.500px; }
.cam small { position: absolute; left: 14px; top: 7px; font-size: 4.500px; line-height: 6px; color: #ccc; }
.ax small { left: 9px; top: 1px; font-size: 4px; color: #999; }
.ax.l small { left: 3px; }
.rot small { left: 6px; top: 8px; font-size: 4px; color: #888; }
.array { width: 103px; margin-left: 2px; padding-right: 4px; }
.point { width: 2px; height: 2px; margin-right: 8px; background: #e5ad28; }
.component { width: 57px; margin-left: 3px; }
.repr { width: 95px; margin: 0 6.500px 0 8px; padding-left: 4px; }
.bar .orient { margin-left: 4px; }
.aei { width: 11px; margin-left: 11px; margin-right: 1px; letter-spacing: -.3px; }
.work { display: flex; flex: 1; min-height: 0; }
.side { width: 190px; flex: none; padding-right: 2px; border-top: 1px solid #252525; }
.title { display: flex; align-items: center; height: 13px; padding: 0 4px 0 3px; }
.btns { display: flex; gap: 4px; margin-left: auto; }
.btns svg { width: 6.500px; height: 6.500px; }
.tree { height: 148px; margin-right: 1px; padding-top: 1px; background: #292929; border: 1px solid #213e5e; border-left-color: #262626; }
.node { display: flex; align-items: center; height: 10.550px; }
.vis { width: 8px; height: 7px; margin-left: 2px; }
.type { width: 8px; height: 8px; margin: 0 .5px 0 4px; }
.twig { align-self: stretch; width: 6px; margin-left: 8px; border-left: 1px solid #555; background: linear-gradient(#555, #555) 0 50% / 4px 1px no-repeat; }
.twig + .type { margin-left: -1px; }
.none { background: none; }
.end { height: 6px; align-self: flex-start; border-bottom: 1px solid #555; background: none; }
.box::before { content: ""; display: block; width: 4px; height: 4px; margin: 3px 0 0 -3px; border: 1px solid #666; background: #222; }
.current { margin-left: -1px; border: 1px solid #414141; line-height: 8px; }
.tabs { display: flex; height: 16px; margin-top: 3px; background: #292929; color: #999; }
.tabs span { padding: 3px 6px 0; }
.tabs .active { color: #f3f3f3; font-weight: 600; width: 45px; background: #303030; border-bottom: 2px solid #235996; letter-spacing: -.35px; }
.title.prop { height: 15px; }
button { display: flex; align-items: center; justify-content: center; gap: 3px; height: 16px; padding: 0; border: 1px solid #272727; border-radius: 2px; background: #393939; color: #ddd; font: inherit; white-space: nowrap; }
.actions { display: grid; grid-template-columns: repeat(4, 43px); gap: 2px; padding: 2px 0 0 5px; }
.actions .off { background: #313131; color: #929292; }
.actions svg { width: 8px; height: 8px; }
.actions svg.x { width: 5px; height: 5px; }
.actions .off:first-child svg { filter: grayscale(1); }
.actions .help { color: #9cc971; font-weight: 600; font-size: 8px; }
.search { display: flex; gap: 2px; padding: 4px 0 0 5px; }
.field { display: flex; align-items: center; height: 16px; padding-left: 5px; background: #2a2a2a; border: 1px solid #242424; border-radius: 2px; }
.search .field { width: 163px; color: #888; }
.cog { display: flex; align-items: center; justify-content: center; width: 13px; height: 16px; background: #222; border-radius: 2px; }
.cog svg { width: 7px; height: 7px; }
.scroller { display: flex; height: 178px; margin-top: 2px; overflow: hidden; }
.form { width: 177px; padding-left: 4px; overflow: hidden; flex: none; }
.thumb { width: 2px; height: 51px; margin: 5px 0 0 4px; background: #989898; }
.cut { height: 8px; overflow: hidden; }
.cutrow { display: flex; align-items: center; height: 16px; margin-top: -8px; }
.cutrow span { width: 34px; letter-spacing: -.2px; }
.plane { display: flex; align-items: center; flex: 1; height: 16px; padding: 0 4px; background: #2d2d2d; border: 1px solid #252525; }
h2 { margin: 5px 0 0; height: 9px; font-size: 7.300px; line-height: 8px; letter-spacing: -.3px; color: #eee; border-bottom: 1px solid #444; }
.check { display: flex; align-items: center; height: 15px; margin-top: .8px; gap: 3px; }
.check i { width: 8px; height: 8px; margin-left: 1px; background: #292929; border: 1px solid #202020; border-radius: 2px; }
.vec { display: grid; grid-template-columns: 25px 49px 49px 49px; column-gap: 1.500px; align-items: center; height: 17px; letter-spacing: -.1px; }
.note { margin: 1px 0 0; font-size: 6.700px; font-weight: 700; line-height: 8.400px; height: 18px; white-space: nowrap; letter-spacing: -.33px; }
.normals { display: grid; grid-template-columns: 86px 86px; gap: 1.500px 3px; }
.wide { grid-column: span 2; }
.view { width: 506px; display: flex; flex-direction: column; background: #303030; }
.layouts { display: flex; height: 17px; border-bottom: 1px solid #222; width: 506px; background: linear-gradient(90deg, #2b2b2b 104px, #323232 104px); }
.layout { display: flex; align-items: center; width: 65px; padding-left: 3px; border-bottom: 1px solid #245a95; background: #303030; }
.layout svg { width: 6px; height: 6px; }
.layout b { width: 47px; padding-left: 9px; font-weight: 600; letter-spacing: -.55px; color: #eee; white-space: nowrap; }
.add { width: 42px; padding-top: 3px; text-align: center; color: #aaa; }
.vbar { display: flex; align-items: center; height: 16px; }
.vbar svg { width: 14.800px; height: 10.500px; }
.vbar .g { margin-left: 3.300px; }
.vname { margin: 0 4.500px 0 30px; width: 43px; font-weight: 600; letter-spacing: -.42px; text-decoration: underline; color: #eee; }
.render { display: block; width: 506px; height: 381px; background: #52566b; }
.ticks { fill: #15161c; font: 500 7.700px Lato, sans-serif; }
.mark { position: absolute; border: 2px solid #00f22b; }
.mark.red { border-color: #f7360c; }
.m1 { left: 125px; top: 11px; width: 110px; height: 30px; }
.m2 { left: 454px; top: 15px; width: 108px; height: 22px; }
.m3 { left: 1px; top: 102px; width: 11px; height: 21px; }
.m4 { left: 622px; top: 107px; width: 55px; height: 335px; }
.m5 { left: 1px; top: 79px; width: 78px; height: 14px; }
.m6 { left: 22px; top: 143px; width: 46px; height: 18px; }
```
